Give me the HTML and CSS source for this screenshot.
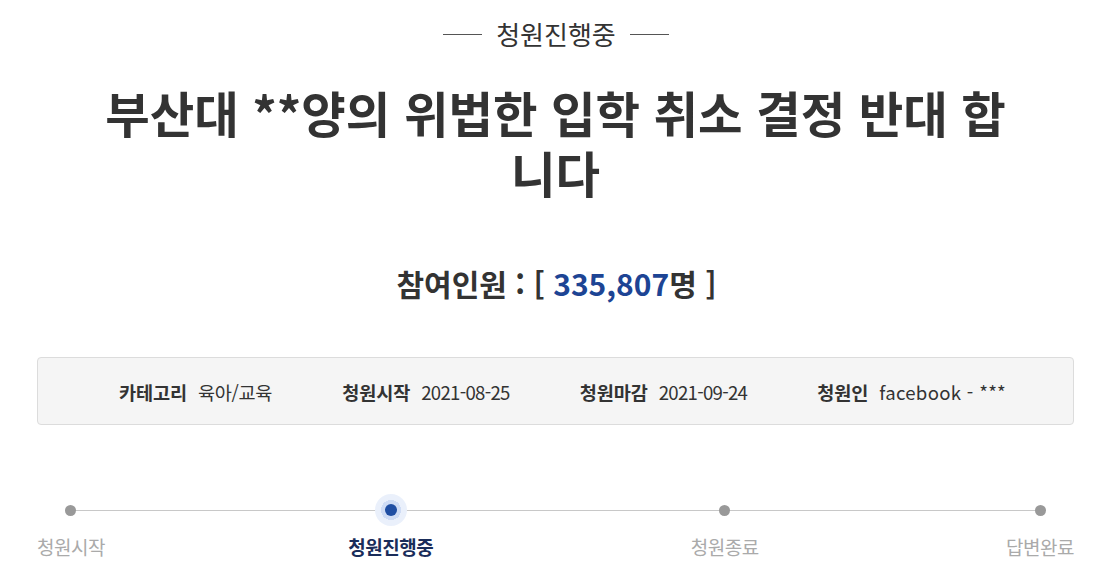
FILE: index.html
```html
<!DOCTYPE html>
<html lang="ko">
<head>
<meta charset="utf-8">
<title>청원</title>
<link rel="stylesheet" href="styles.css">
</head>
<body>
<div class="wrap">
  <div class="status"><span class="status-line"></span><span class="status-text">청원진행중</span><span class="status-line"></span></div>
  <h1 class="title">부산대 **양의 위법한 입학 취소 결정 반대 합니다</h1>
  <h2 class="count">참여인원 : [ <span class="num">335,807</span>명 ]</h2>
  <ul class="info">
    <li><strong>카테고리</strong><span>육아/교육</span></li>
    <li><strong>청원시작</strong><span class="date">2021-08-25</span></li>
    <li><strong>청원마감</strong><span class="date">2021-09-24</span></li>
    <li><strong>청원인</strong><span class="author">facebook - ***</span></li>
  </ul>
  <ol class="steps">
    <li class="step s1"><span class="dot"></span><span class="label">청원시작</span></li>
    <li class="step s2 active"><span class="dot"></span><span class="label">청원진행중</span></li>
    <li class="step s3"><span class="dot"></span><span class="label">청원종료</span></li>
    <li class="step s4"><span class="dot"></span><span class="label">답변완료</span></li>
  </ol>
</div>
</body>
</html>
```

FILE: styles.css
```css
* { box-sizing: border-box; }
html, body { margin: 0; padding: 0; background: #fff; }
body {
  font-family: "Noto Sans CJK KR", "Noto Sans", sans-serif;
  color: #333;
}
.wrap {
  width: 1037px;
  margin-left: 37px;
  padding-top: 14px;
}
.status {
  display: flex;
  justify-content: center;
  align-items: center;
  gap: 14px;
  height: 40px;
  padding-left: 1px;
}
.status-line {
  width: 39px;
  height: 1px;
  background: #555;
}
.status-text {
  font-size: 26px;
  line-height: 40px;
  color: #333;
}
.title {
  margin: 28px auto 0;
  width: 940px;
  font-size: 48.4px;
  line-height: 60px;
  font-weight: 700;
  text-align: center;
  color: #333;
  letter-spacing: 0;
  padding-left: 0;
}
.count {
  margin: 60px 0 0;
  text-align: center;
  font-size: 30px;
  line-height: 42px;
  font-weight: 700;
  color: #333;
  padding-left: 2px;
}
.num { color: #1d4494; }
.info {
  list-style: none;
  margin: 53px 0 0;
  padding: 0 0 0 14px;
  height: 68px;
  display: flex;
  justify-content: center;
  align-items: center;
  gap: 70px;
  background: #f5f5f5;
  border: 1px solid #dcdcdc;
  border-radius: 4px;
  font-size: 18.6px;
  letter-spacing: -0.3px;
  color: #333;
}
.info li { white-space: nowrap; }
.info strong {
  font-weight: 700;
  margin-right: 11px;
  letter-spacing: -0.1px;
}
.info .date { letter-spacing: -0.7px; }
.info .author { letter-spacing: 0.3px; }
.steps {
  list-style: none;
  margin: 69px 0 0;
  padding: 0;
  display: grid;
  grid-template-columns: auto 243fr auto 257fr auto 247fr auto;
  position: relative;
}
.steps::before {
  content: "";
  position: absolute;
  left: 33px;
  right: 34px;
  top: 16px;
  height: 1px;
  background: #c8c8c8;
}
.s1 { grid-column: 1; }
.s2 { grid-column: 3; }
.s3 { grid-column: 5; }
.s4 { grid-column: 7; }
.step {
  display: flex;
  flex-direction: column;
  align-items: center;
  position: relative;
}
.dot {
  width: 32px;
  height: 32px;
  display: flex;
  align-items: center;
  justify-content: center;
  border-radius: 50%;
}
.dot::after {
  content: "";
  width: 11px;
  height: 11px;
  border-radius: 50%;
  background: #999;
}
.active .dot {
  background: radial-gradient(circle, #cfdcf5 0 10px, #eaf0fb 10px 16px);
}
.active .dot::after {
  width: 12px;
  height: 12px;
  background: #1f4ea3;
}
.label {
  margin-top: 8px;
  font-size: 19px;
  line-height: 26px;
  color: #aaa;
  letter-spacing: -0.5px;
}
.active .label {
  color: #1a2d5a;
  font-weight: 700;
}
```
